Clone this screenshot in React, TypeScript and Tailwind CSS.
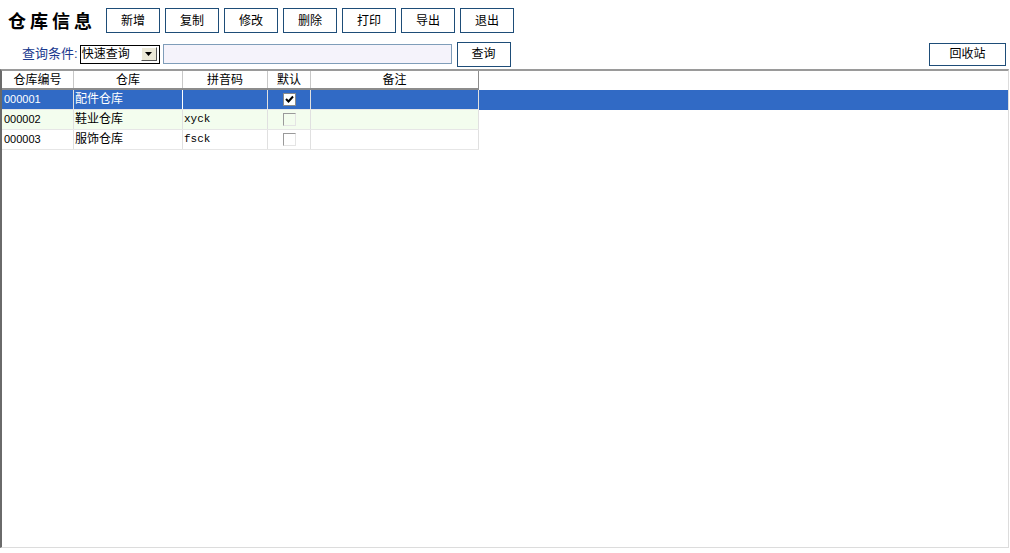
import { useState } from "react";

interface Warehouse { code: string; name: string; pinyin: string; isDefault: boolean; note: string }

const rows: Warehouse[] = [
  { code: "000001", name: "配件仓库", pinyin: "", isDefault: true, note: "" },
  { code: "000002", name: "鞋业仓库", pinyin: "xyck", isDefault: false, note: "" },
  { code: "000003", name: "服饰仓库", pinyin: "fsck", isDefault: false, note: "" },
];

const actions = ["新增", "复制", "修改", "删除", "打印", "导出", "退出"];

const font = { fontFamily: '"Liberation Sans", "Noto Sans CJK SC", sans-serif' };

function ToolButton({ label, className = "" }: { label: string; className?: string }) {
  return (
    <button className={`h-[25px] w-[54px] border border-[#1e4d78] bg-white text-[12px] text-black ${className}`}>
      {label}
    </button>
  );
}

function Check({ on }: { on: boolean }) {
  return (
    <span className={`flex h-[13px] w-[13px] items-center justify-center border ${on ? "border-[#8a8a8a] bg-white" : "border-t-[#9a9a9a] border-l-[#9a9a9a] border-r-[#e4e4e4] border-b-[#e4e4e4] bg-transparent"}`}>
      {on && (
        <svg width="9" height="9" viewBox="0 0 9 9">
          <path d="M1 4 L3.5 6.5 L8 1.5" fill="none" stroke="#000" strokeWidth="2" />
        </svg>
      )}
    </span>
  );
}

export default function App() {
  const [selected, setSelected] = useState(0);
  const [query, setQuery] = useState("");

  return (
    <div className="h-[553px] w-[1010px] overflow-hidden bg-white text-[12px] text-black" style={font}>
      {/* title + toolbar */}
      <div className="flex h-[40px] items-center pl-[8px] pt-[1px]">
        <h1 className="w-[98px] text-[18px] font-bold tracking-[4px]" style={{ fontFamily: '"Noto Sans CJK SC", sans-serif' }}>仓库信息</h1>
        <div className="flex gap-[5px]">
          {actions.map((a) => <ToolButton key={a} label={a} />)}
        </div>
      </div>

      {/* query bar */}
      <div className="flex h-[28px] items-center pl-[22px] pr-[4px]">
        <span className="text-[13px] text-[#1a3a8f]">查询条件:</span>
        <div className="ml-[2px] flex h-[19px] w-[80px] items-center justify-between border border-black bg-white pl-[1px] pr-[2px]">
          <span className="text-[12px]">快速查询</span>
          <span className="flex h-[14px] w-[16px] items-center justify-center border border-t-white border-l-white border-r-[#555] border-b-[#555] bg-[#ece9d8]">
            <svg width="7" height="4" viewBox="0 0 7 4"><path d="M0 0 H7 L3.5 4 Z" fill="#000" /></svg>
          </span>
        </div>
        <input
          value={query}
          onChange={(e) => setQuery(e.target.value)}
          className="ml-[3px] h-[20px] w-[289px] border border-[#7f9db9] bg-[#f5f3fb] px-1 outline-none"
        />
        <ToolButton label="查询" className="ml-[5px]" />
        <div className="flex-1" />
        <button className="h-[23px] w-[77px] border border-[#1e4d78] bg-white text-[12px]">回收站</button>
      </div>

      {/* grid */}
      <div className="mt-[1px] h-[479px] w-[1009px] border-t-2 border-l-2 border-t-[#9a9a9a] border-l-[#6a6a6a] border-b border-b-[#dcdcdc] border-r border-r-[#dcdcdc]">
        <div className="flex h-[19px] w-[477px] border-b-2 border-b-[#8c8c8c] text-center">
          <div className="w-[72px] border-r border-[#c8c8c8] leading-[18px]">仓库编号</div>
          <div className="w-[109px] border-r border-[#c8c8c8] leading-[18px]">仓库</div>
          <div className="w-[85px] border-r border-[#c8c8c8] leading-[18px]">拼音码</div>
          <div className="w-[43px] border-r border-[#c8c8c8] leading-[18px]">默认</div>
          <div className="w-[168px] border-r border-[#8c8c8c] leading-[18px]">备注</div>
        </div>
        {rows.map((r, i) => {
          const sel = i === selected;
          const bg = sel ? "bg-[#316ac5] text-white" : i % 2 === 1 ? "bg-[#f3fdee]" : "bg-white";
          return (
            <div key={r.code} onClick={() => setSelected(i)} className={`flex h-[20px] ${sel ? "w-full bg-[#316ac5]" : "w-[477px]"}`}>
              <div className={`flex w-[477px] border-b border-[#e6e6e6] ${bg}`}>
                <div className="w-[72px] border-r border-[#e0e0e0] pl-[2px] leading-[19px] text-[11px]">{r.code}</div>
                <div className={`w-[109px] border-r pl-[1px] leading-[19px] ${sel ? "border-white" : "border-[#e0e0e0]"}`}>{r.name}</div>
                <div className="w-[85px] border-r border-[#e0e0e0] pl-[1px] leading-[19px] text-[11px]" style={{ fontFamily: '"Liberation Mono", monospace' }}>{r.pinyin}</div>
                <div className="flex w-[43px] items-center justify-center border-r border-[#e0e0e0]">
                  <Check on={r.isDefault} />
                </div>
                <div className="w-[168px] border-r border-[#e0e0e0]">{r.note}</div>
              </div>
            </div>
          );
        })}
      </div>
    </div>
  );
}
